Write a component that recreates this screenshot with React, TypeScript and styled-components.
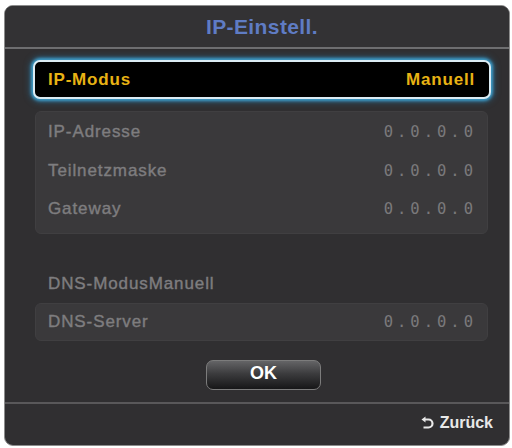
import React from "react";
import styled, { createGlobalStyle } from "styled-components";

const Global = createGlobalStyle`
  html, body { margin: 0; padding: 0; background: #ffffff; }
  body { font-family: "Liberation Sans", Arial, sans-serif; }
`;

const Panel = styled.div`
  box-sizing: border-box;
  margin: 5px 2px 0 4px;
  width: 506px;
  height: 441px;
  background: #302f31;
  border: 1px solid #8c8c8c;
  border-radius: 9px;
  display: flex;
  flex-direction: column;
  overflow: hidden;
`;

const Header = styled.div`
  height: 41px;
  display: flex;
  align-items: center;
  justify-content: center;
  padding-left: 10px;
  background: #333234;
  border-bottom: 2px solid #6e6e70;
  color: #5f7cc4;
  font-size: 21px;
  font-weight: bold;
  letter-spacing: 0.4px;
`;

const Body = styled.div`
  flex: 1;
  display: flex;
  flex-direction: column;
  padding: 11px 21px 0 30px;
`;

const Selected = styled.div`
  box-sizing: border-box;
  height: 39px;
  margin: 0 -3px 0 -2px;
  display: flex;
  align-items: center;
  justify-content: space-between;
  padding: 0 14px 0 13px;
  background: #000;
  border: 2px solid #dcecf4;
  border-radius: 7px;
  box-shadow: 0 0 3px 2px #3e9cc8, 0 0 6px 3px rgba(40, 130, 180, 0.5);
  color: #e8b214;
  font-weight: bold;
  font-size: 17px;
  letter-spacing: 0.8px;
`;

const Group = styled.div<{ $top: number }>`
  margin-top: ${(p) => p.$top}px;
  background: #3a393b;
  border: 1px solid #403f41;
  border-radius: 6px;
  padding: ${(p) => (p.$top > 0 ? "1px 0 5px" : "0")};
  display: flex;
  flex-direction: column;
`;

const Row = styled.div<{ $h: number }>`
  height: ${(p) => p.$h}px;
  display: flex;
  align-items: center;
  justify-content: space-between;
  padding: 0 14px 0 12px;
`;

const Label = styled.span`
  color: #7e7d7f;
  font-size: 17px;
  letter-spacing: 0.9px;
  -webkit-text-stroke: 0.4px #7e7d7f;
`;

const Value = styled.span`
  color: #7a797b;
  font-family: "DejaVu Sans Mono", "Liberation Mono", monospace;
  font-size: 15.5px;
  letter-spacing: 4px;
  margin-right: -4px;
`;

const PlainRow = styled.div`
  margin-top: 31px;
  height: 38px;
  display: flex;
  align-items: center;
  padding-left: 13px;
`;

const ButtonWrap = styled.div`
  display: flex;
  justify-content: center;
  margin-top: 19px;
  padding-left: 4px;
`;

const OkButton = styled.div`
  box-sizing: border-box;
  width: 115px;
  height: 30px;
  display: flex;
  align-items: center;
  justify-content: center;
  border: 1px solid #7c7c7c;
  border-radius: 7px;
  background: linear-gradient(#646466 0%, #3c3c3e 45%, #161617 100%);
  color: #ffffff;
  font-weight: bold;
  font-size: 18px;
  padding-bottom: 4px;
`;

const Footer = styled.div`
  height: 38px;
  border-top: 2px solid #59585a;
  display: flex;
  align-items: center;
  justify-content: flex-end;
  gap: 5px;
  padding: 0 16px 3px 0;
  color: #e8e8e8;
  font-weight: bold;
  font-size: 16px;
`;

const BackIcon = () => (
  <svg width="14" height="14" viewBox="0 0 14 14">
    <path
      d="M3 3.5 H7.5 A4 4 0 0 1 7.5 11.5 H2.5"
      fill="none"
      stroke="#e8e8e8"
      strokeWidth="2.2"
    />
    <path d="M0.5 3.5 L4.5 0.5 L4.5 6.5 Z" fill="#e8e8e8" />
  </svg>
);

const rows = [
  { label: "IP-Adresse", value: "0.0.0.0", h: 38 },
  { label: "Teilnetzmaske", value: "0.0.0.0", h: 39 },
  { label: "Gateway", value: "0.0.0.0", h: 38 },
];

export default function App() {
  return (
    <>
      <Global />
      <Panel>
        <Header>IP-Einstell.</Header>
        <Body>
          <Selected>
            <span>IP-Modus</span>
            <span>Manuell</span>
          </Selected>
          <Group $top={12}>
            {rows.map((r) => (
              <Row key={r.label} $h={r.h}>
                <Label>{r.label}</Label>
                <Value>{r.value}</Value>
              </Row>
            ))}
          </Group>
          <PlainRow>
            <Label>DNS-ModusManuell</Label>
          </PlainRow>
          <Group $top={0}>
            <Row $h={36}>
              <Label>DNS-Server</Label>
              <Value>0.0.0.0</Value>
            </Row>
          </Group>
          <ButtonWrap>
            <OkButton>OK</OkButton>
          </ButtonWrap>
        </Body>
        <Footer>
          <BackIcon />
          <span>Zurück</span>
        </Footer>
      </Panel>
    </>
  );
}
